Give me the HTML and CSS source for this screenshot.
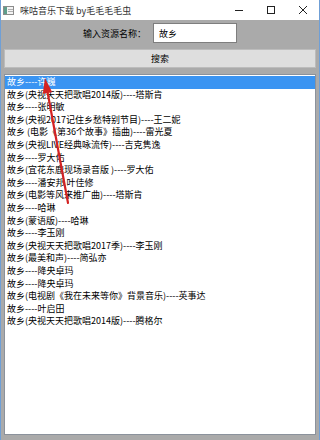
FILE: index.html
```html
<!DOCTYPE html>
<html lang="zh-CN">
<head>
    <meta charset="UTF-8">
    <title>咪咕音乐下载 by毛毛毛毛虫</title>
    <link rel="stylesheet" href="styles.css">
</head>
<body>
    <div class="window">
        <div class="titlebar">
            <svg class="app-icon" width="11" height="9" viewBox="0 0 11 9">
                <rect x="0.5" y="0.5" width="10" height="8" fill="#f4f4f4" stroke="#8c8c8c"/>
                <rect x="1" y="1" width="3" height="7" fill="#5e9e8c"/>
                <rect x="5" y="3" width="5" height="1" fill="#b0b0b0"/>
                <rect x="5" y="5" width="5" height="1" fill="#b0b0b0"/>
            </svg>
            <span class="title">咪咕音乐下载 by毛毛毛毛虫</span>
            <div class="controls">
                <div class="ctrl">
                    <svg width="10" height="10" viewBox="0 0 10 10"><path d="M1 5.5h8" stroke="#222" stroke-width="1"/></svg>
                </div>
                <div class="ctrl">
                    <svg width="10" height="10" viewBox="0 0 10 10"><rect x="1.5" y="1.5" width="7" height="7" fill="none" stroke="#222"/></svg>
                </div>
                <div class="ctrl">
                    <svg width="10" height="10" viewBox="0 0 10 10"><path d="M1 1l8 8M9 1l-8 8" stroke="#222" stroke-width="1"/></svg>
                </div>
            </div>
        </div>
        <div class="content">
            <div class="form-row">
                <label class="label" for="keyword">输入资源名称：</label>
                <input class="input" id="keyword" type="text" value="故乡">
            </div>
            <button class="search-btn">搜索</button>
            <ul class="result-list">
                <li class="selected">故乡----许巍</li>
                <li>故乡(央视天天把歌唱2014版)----塔斯肯</li>
                <li>故乡----张明敏</li>
                <li>故乡(央视2017记住乡愁特别节目)----王二妮</li>
                <li>故乡 (电影《第36个故事》插曲)----雷光夏</li>
                <li>故乡(央视LIVE经典咏流传)----吉克隽逸</li>
                <li>故乡----罗大佑</li>
                <li>故乡(宜花东鹿现场录音版 )----罗大佑</li>
                <li>故乡----潘安邦 叶佳修</li>
                <li>故乡(电影等风来推广曲)----塔斯肯</li>
                <li>故乡----哈琳</li>
                <li>故乡(蒙语版)----哈琳</li>
                <li>故乡----李玉刚</li>
                <li>故乡(央视天天把歌唱2017季)----李玉刚</li>
                <li>故乡(最美和声)----简弘亦</li>
                <li>故乡----降央卓玛</li>
                <li>故乡----降央卓玛</li>
                <li>故乡(电视剧《我在未来等你》背景音乐)----英事达</li>
                <li>故乡----叶启田</li>
                <li>故乡(央视天天把歌唱2014版)----腾格尔</li>
            </ul>
        </div>
        <!-- annotation arrow drawn over the screenshot -->
        <svg class="annotation" width="320" height="440" viewBox="0 0 320 440">
            <path d="M68 203L47.5 92" stroke="#d42222" stroke-width="2.2" stroke-linecap="round"/>
            <path d="M45 78L52.2 92.2L42.8 93.8Z" fill="#d42222"/>
        </svg>
    </div>
</body>
</html>
```

FILE: styles.css
```css
body { margin: 0; font-family: "Noto Sans CJK SC", "Noto Sans", sans-serif; }
.window { position: relative; width: 320px; height: 440px; box-sizing: border-box; background: #aaaaaa; border-left: 1px solid #6f9fd6; border-right: 1px solid #6f9fd6; display: flex; flex-direction: column; overflow: hidden; }
.titlebar { height: 20px; background: #fff; display: flex; align-items: center; flex-shrink: 0; }
.app-icon { margin-left: 2px; display: block; }
.title { margin-left: 6px; font-size: 9px; color: #333; white-space: nowrap; }
.controls { margin-left: auto; display: flex; height: 20px; }
.ctrl { width: 32px; display: flex; align-items: center; justify-content: center; }
.ctrl svg { display: block; }
.content { flex: 1; display: flex; flex-direction: column; padding: 3px 3px 5px 3px; min-height: 0; }
.form-row { display: flex; justify-content: center; align-items: center; gap: 7px; height: 20px; }
.label { font-size: 9px; color: #000; }
.input { box-sizing: border-box; width: 84px; height: 20px; margin: 0; padding: 0 5px; border: 1px solid #7e7e7e; background: #fff; font-family: inherit; font-size: 9px; color: #000; outline: none; }
.search-btn { box-sizing: border-box; margin-top: 6px; height: 19px; width: 100%; border: 1px solid #bcbcbc; background: #dedede; font-family: inherit; font-size: 9px; color: #000; padding: 0; }
.result-list { flex: 1; margin: 6px 0 0 0; padding: 1px 0 0 0; list-style: none; background: #fff; border: 1px solid #8b929c; min-height: 0; overflow: hidden; }
.result-list li { height: 12.6px; line-height: 12.6px; padding-left: 2px; font-size: 9px; color: #000; white-space: nowrap; }
.result-list li.selected { background: #3a94f2; color: #fff; }
.annotation { position: absolute; left: -1px; top: 0; pointer-events: none; }
```
